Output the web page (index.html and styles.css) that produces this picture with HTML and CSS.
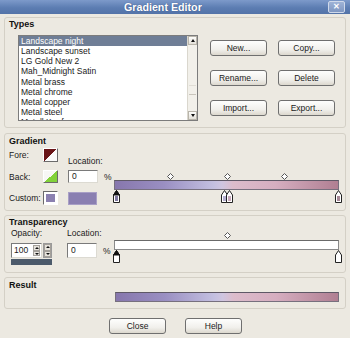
FILE: index.html
```html
<!DOCTYPE html>
<html lang="en">
<head>
  <meta charset="UTF-8">
  <title>Gradient Editor</title>
  <link rel="stylesheet" href="styles.css">
</head>
<body>
  <div class="dialog">
    <div class="titlebar">
      <span class="title">Gradient Editor</span>
      <span class="close">✕</span>
    </div>

    <div class="group types">
      <div class="legend">Types</div>
      <div class="types-body">
        <div class="listbox">
          <ul class="items">
            <li class="selected">Landscape night</li>
            <li>Landscape sunset</li>
            <li>LG Gold New 2</li>
            <li>Mah_Midnight Satin</li>
            <li>Metal brass</li>
            <li>Metal chrome</li>
            <li>Metal copper</li>
            <li>Metal steel</li>
            <li>Metall Kupfer</li>
          </ul>
          <div class="scrollbar">
            <div class="arrow up"></div>
            <div class="track"><div class="thumb"></div></div>
            <div class="arrow down"></div>
          </div>
        </div>
        <div class="actions">
          <button class="btn">New...</button>
          <button class="btn">Copy...</button>
          <button class="btn">Rename...</button>
          <button class="btn">Delete</button>
          <button class="btn">Import...</button>
          <button class="btn">Export...</button>
        </div>
      </div>
    </div>

    <div class="group gradient">
      <div class="legend">Gradient</div>
      <div class="group-body">
        <div class="colors">
          <span class="lbl">Fore:</span>
          <span class="swatch fore"></span>
          <span class="loc-label">Location:</span>
          <span class="lbl">Back:</span>
          <span class="swatch back"></span>
          <span class="field"><span class="input">0</span><span class="pct">%</span></span>
          <span class="lbl">Custom:</span>
          <span class="swatch custom"><span></span></span>
          <span class="field"><span class="chip"></span></span>
        </div>
        <div class="stops">
          <div class="midpoints">
            <svg class="diamond" style="left: 53px" width="7" height="7" viewBox="0 0 7 7"><path d="M3.5 .5 6.5 3.5 3.5 6.5 .5 3.5Z" fill="#fff" stroke="#555"/></svg>
            <svg class="diamond" style="left: 110px" width="7" height="7" viewBox="0 0 7 7"><path d="M3.5 .5 6.5 3.5 3.5 6.5 .5 3.5Z" fill="#fff" stroke="#555"/></svg>
            <svg class="diamond" style="left: 167px" width="7" height="7" viewBox="0 0 7 7"><path d="M3.5 .5 6.5 3.5 3.5 6.5 .5 3.5Z" fill="#fff" stroke="#555"/></svg>
          </div>
          <div class="bar color-bar"></div>
          <div class="markers">
            <svg class="marker" style="left: -1px" width="7" height="13" viewBox="0 0 7 13"><path d="M3.5 .5 6.5 5V12.5H.5V5Z" fill="#fff" stroke="#222"/><rect x="2" y="6" width="3" height="5" fill="#7f789f"/><path d="M3.5 .5 6.5 5H.5Z" fill="#111" stroke="#111"/></svg>
            <svg class="marker" style="left: 107px" width="7" height="13" viewBox="0 0 7 13"><path d="M3.5 .5 6.5 5V12.5H.5V5Z" fill="#fff" stroke="#222"/><rect x="2" y="6" width="3" height="5" fill="#b4aed0"/></svg>
            <svg class="marker" style="left: 112px" width="7" height="13" viewBox="0 0 7 13"><path d="M3.5 .5 6.5 5V12.5H.5V5Z" fill="#fff" stroke="#222"/><rect x="2" y="6" width="3" height="5" fill="#c8aabb"/></svg>
            <svg class="marker" style="left: 221px" width="7" height="13" viewBox="0 0 7 13"><path d="M3.5 .5 6.5 5V12.5H.5V5Z" fill="#fff" stroke="#222"/><rect x="2" y="6" width="3" height="5" fill="#a88a98"/></svg>
          </div>
        </div>
      </div>
    </div>

    <div class="group transparency">
      <div class="legend">Transparency</div>
      <div class="group-body">
        <div class="opacity">
          <span class="t-label">Opacity:</span>
          <span class="t-label">Location:</span>
          <span class="spin">
            <span class="spin-row">
              <span class="input num">100<span class="spinner"><i class="up"></i><i class="down"></i></span></span>
              <span class="spinner outer"><i class="up"></i><i class="down"></i></span>
            </span>
            <span class="strip"></span>
          </span>
          <span class="field"><span class="input tall">0</span><span class="pct">%</span></span>
        </div>
        <div class="stops">
          <div class="midpoints">
            <svg class="diamond" style="left: 110px" width="7" height="7" viewBox="0 0 7 7"><path d="M3.5 .5 6.5 3.5 3.5 6.5 .5 3.5Z" fill="#fff" stroke="#555"/></svg>
          </div>
          <div class="bar alpha-bar"></div>
          <div class="markers">
            <svg class="marker" style="left: -1px" width="7" height="13" viewBox="0 0 7 13"><path d="M3.5 .5 6.5 5V12.5H.5V5Z" fill="#fff" stroke="#222"/><path d="M3.5 .5 6.5 5H.5Z" fill="#111" stroke="#111"/></svg>
            <svg class="marker" style="left: 221px" width="7" height="13" viewBox="0 0 7 13"><path d="M3.5 .5 6.5 5V12.5H.5V5Z" fill="#fff" stroke="#222"/></svg>
          </div>
        </div>
      </div>
    </div>

    <div class="group result">
      <div class="legend">Result</div>
      <div class="bar result-bar"></div>
    </div>

    <div class="footer">
      <button class="btn">Close</button>
      <button class="btn">Help</button>
    </div>
  </div>
</body>
</html>
```

FILE: styles.css
```css
body {
  margin: 0;
  background: #ece9e1;
  font-family: "Liberation Sans", Arial, sans-serif;
  font-size: 8.5px;
  color: #1a1a1a;
}
.dialog {
  width: 350px;
  height: 338px;
  overflow: hidden;
  background: #ece9e1;
}
.titlebar {
  height: 14px;
  display: flex;
  align-items: center;
  padding-left: 124px;
  background: linear-gradient(#7d9aca, #5c7db2 55%, #5373a8);
}
.title {
  color: #fff;
  font-weight: bold;
  font-size: 10.7px;
  line-height: 14px;
  text-shadow: 0 0 1px #2d4677;
}
.close {
  margin-left: auto;
  margin-right: 5px;
  width: 15px;
  height: 10px;
  border: 1px solid #cfd9ea;
  border-radius: 2px;
  background: linear-gradient(#9fb3d6, #7f97c2);
  color: #fff;
  font-size: 8px;
  font-weight: bold;
  line-height: 10px;
  text-align: center;
}

.group {
  margin: 0 4px;
  border: 1px solid #d4d0c6;
  border-radius: 3px;
  box-sizing: border-box;
}
.types { margin-top: 3px; height: 111px; }
.gradient { margin-top: 5px; height: 78px; }
.transparency { margin-top: 4px; height: 58px; }
.result { margin-top: 4px; height: 32px; }
.legend {
  font-weight: bold;
  font-size: 9px;
  line-height: 10px;
  padding: 1px 0 0 4px;
  color: #111;
}
.gradient .legend,
.result .legend {
  padding-top: 2px;
}

/* types */
.types-body {
  display: flex;
  margin-top: 6px;
  padding-left: 13px;
}
.listbox {
  width: 180px;
  height: 86px;
  box-sizing: border-box;
  border: 1px solid #7c7c7c;
  background: #fff;
  display: flex;
}
.items {
  flex: 1;
  list-style: none;
  margin: 0;
  padding: 0;
  overflow: hidden;
}
.items li {
  height: 10.15px;
  line-height: 10.15px;
  padding-left: 2px;
  white-space: nowrap;
}
.items li.selected {
  background: #6f7e96;
  color: #fff;
}
.scrollbar {
  width: 9px;
  display: flex;
  flex-direction: column;
  background: #f2f0ea;
  border-left: 1px solid #dad7ce;
}
.arrow {
  height: 9px;
  box-sizing: border-box;
  border: 1px solid #b9b5ab;
  background: linear-gradient(#fdfdfb, #e3e0d8);
  position: relative;
}
.arrow::after {
  content: "";
  position: absolute;
  left: 1.5px;
  top: 2px;
  border-left: 2.5px solid transparent;
  border-right: 2.5px solid transparent;
}
.arrow.up::after { border-bottom: 3px solid #111; }
.arrow.down::after { border-top: 3px solid #111; }
.track {
  flex: 1;
  padding-top: 40px;
}
.thumb {
  height: 8px;
  margin: 0 1px;
  border-top: 1px solid #e0ddd5;
  border-bottom: 1px solid #c9c5bc;
}
.actions {
  display: grid;
  grid-template-columns: 57px 57px;
  grid-template-rows: 16px 16px 16px;
  column-gap: 11px;
  row-gap: 14px;
  margin: 5px 0 0 12px;
}
.btn {
  height: 16px;
  padding: 0;
  font-family: inherit;
  font-size: 8.5px;
  color: #1a1a1a;
  border: 1px solid #6f6f6f;
  border-radius: 3px;
  background: linear-gradient(#fefefd, #f1f0ec 60%, #dcd8ce);
}

/* gradient + transparency */
.group-body {
  display: flex;
}
.gradient .group-body { margin-top: 2px; }
.transparency .group-body { margin-top: 1px; }
.colors {
  width: 109px;
  box-sizing: border-box;
  padding-left: 4px;
  display: grid;
  grid-template-columns: 34px 15px 1fr;
  grid-template-rows: 14px 13px 14px;
  row-gap: 8px;
  align-items: center;
}
.swatch {
  height: 100%;
  box-sizing: border-box;
  border: 1px solid;
  border-color: #fff #6b6b6b #6b6b6b #fff;
}
.swatch.fore { background: linear-gradient(to bottom right, #6a1518 50%, #fbfbfb 50%); }
.swatch.back { background: linear-gradient(to bottom right, #f7f7f5 50%, #82d23a 50%); }
.swatch.custom {
  padding: 2px;
  background: #fff;
  border-color: #6b6b6b #fff #fff #6b6b6b;
}
.swatch.custom span {
  display: block;
  height: 100%;
  background: #8b80b0;
}
.loc-label {
  align-self: end;
  margin: 0 0 -4px 10px;
  line-height: 10px;
}
.field {
  display: flex;
  align-items: center;
  margin-left: 10px;
  height: 100%;
}
.input {
  box-sizing: border-box;
  width: 30px;
  height: 13px;
  line-height: 11px;
  padding-left: 3px;
  background: #fff;
  border: 1px solid;
  border-color: #7a7a7a #dcdad2 #dcdad2 #7a7a7a;
}
.pct { margin-left: 6px; }
.chip {
  width: 29px;
  height: 13px;
  box-sizing: border-box;
  background: #8a7fb1;
  border: 1px solid #a89fc6;
}
.stops {
  width: 225px;
  display: flex;
  flex-direction: column;
  justify-content: flex-end;
  padding-bottom: 2px;
}
.midpoints,
.markers {
  position: relative;
}
.gradient .midpoints { height: 7px; margin-bottom: 0; }
.transparency .midpoints { height: 7px; margin-bottom: 1px; }
.diamond,
.marker {
  position: absolute;
  top: 0;
}
.markers { height: 13px; }
.bar {
  height: 10px;
  box-sizing: border-box;
  border: 1px solid #77707e;
  border-top-color: #5e5866;
}
.color-bar,
.result-bar {
  background: linear-gradient(to right, #8777ad 0%, #9a8fc2 22%, #c3bfe0 44%, #cfc5e0 48%, #dcbccb 53%, #d6aec0 72%, #b07f92 100%);
}
.alpha-bar {
  background: #fff;
  border-color: #8a8a8a;
  border-top-color: #6a6a6a;
}

.opacity {
  width: 109px;
  box-sizing: border-box;
  padding-left: 6px;
  display: grid;
  grid-template-columns: 56px 1fr;
  grid-template-rows: 10px 22px;
  row-gap: 5px;
  align-items: start;
}
.t-label { line-height: 10px; }
.opacity .t-label:first-child { margin-left: 0; }
.spin {
  display: flex;
  flex-direction: column;
  width: 41px;
}
.spin-row {
  display: flex;
  align-items: center;
}
.input.num {
  width: 33px;
  height: 15px;
  line-height: 13px;
  padding-left: 2px;
  display: flex;
  justify-content: space-between;
}
.input.tall {
  width: 30px;
  height: 15px;
  line-height: 13px;
}
.spinner {
  display: flex;
  flex-direction: column;
  width: 7px;
  margin: 1px 1px 1px 0;
}
.spinner.outer {
  margin: 0 0 0 1px;
  height: 13px;
  border: 1px solid #9a9a9a;
  background: #fff;
}
.spinner i {
  flex: 1;
  position: relative;
  background: #e6e3dc;
  border: 1px solid #a4a09a;
  box-sizing: border-box;
}
.spinner i::after {
  content: "";
  position: absolute;
  left: 0.5px;
  top: 1px;
  border-left: 2px solid transparent;
  border-right: 2px solid transparent;
}
.spinner i.up::after { border-bottom: 2px solid #111; }
.spinner i.down::after { border-top: 2px solid #111; }
.strip {
  height: 6px;
  margin-top: 1px;
  background: #4c5a6b;
}
.opacity .field {
  margin-left: 0;
  height: 15px;
}

.result .result-bar {
  margin: 2px 0 0 110px;
  width: 224px;
}

.footer {
  display: flex;
  justify-content: center;
  gap: 19px;
  margin-top: 9px;
  padding-left: 1px;
}
.footer .btn {
  width: 57px;
}
```
